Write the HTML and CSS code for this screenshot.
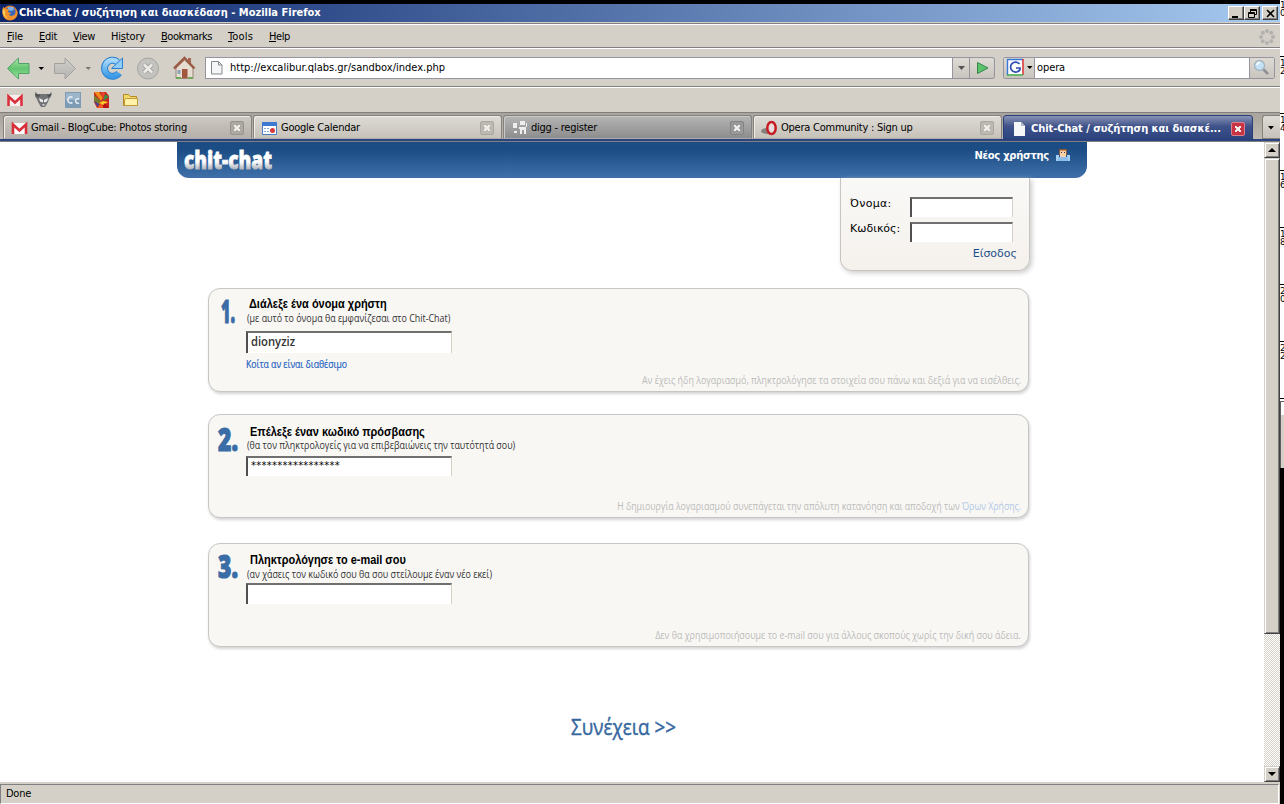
FILE: index.html
```html
<!DOCTYPE html>
<html lang="el">
<head>
<meta charset="utf-8">
<title>Chit-Chat / συζήτηση και διασκέδαση</title>
<link rel="stylesheet" href="styles.css">
</head>
<body>
<div class="desktop">
<div class="window">
  <div class="titlebar">
    <svg class="fox" width="16" height="16" viewBox="0 0 16 16"><circle cx="8" cy="8" r="7.5" fill="#e8832a"/><circle cx="8.5" cy="6.7" r="5" fill="#3a66b8"/><path d="M6 2l5 0 1 3-3 1-3-1z" fill="#7fb2e8"/><path d="M1 2l3 2 3 0-1 3 3 1-2 2 2 1 4-1 2-5c2 6-2 10-7 10C2 15-1 9 1 2z" fill="#f0912c"/><path d="M1 4l2 2 0 4 3 3c-4-1-6-5-5-9z" fill="#fbd35a"/></svg>
    <span class="t wt">Chit-Chat / συζήτηση και διασκέδαση - Mozilla Firefox</span>
    <div class="winbtns">
      <span class="wb"><svg width="12" height="10"><path d="M1 7h6v2H1z"/></svg></span><span class="wb"><svg width="12" height="10"><path d="M3.5 .5h6v5h-2M3.5 1.5h6M1.500 3.500h6v5h-6zM1.500 4.500h6M3.500 0v3" fill="none" stroke="#000"/></svg></span><span class="wb gap"><svg width="12" height="10"><path d="M2 1l7 7M9 1L2 8" stroke="#000" stroke-width="1.600"/></svg></span>
    </div>
  </div>
  <div class="menubar">
    <span class="t file"><u>F</u>ile</span><span class="t edit"><u>E</u>dit</span><span class="t vw"><u>V</u>iew</span><span class="t hist">Hi<u>s</u>tory</span><span class="t bm"><u>B</u>ookmarks</span><span class="t tools"><u>T</u>ools</span><span class="t help"><u>H</u>elp</span>
    <svg class="throb" width="18" height="18" viewBox="-9 -9 18 18" fill="#b3b1ad"><circle cy="-6" r="2"/><circle cy="6" r="2"/><circle cx="6" r="2"/><circle cx="-6" r="2"/><circle cx="4.200" cy="-4.200" r="2"/><circle cx="-4.200" cy="-4.200" r="2"/><circle cx="4.200" cy="4.200" r="2"/><circle cx="-4.200" cy="4.200" r="2"/></svg>
  </div>
  <div class="navbar">
    <svg class="navicons" width="200" height="36" viewBox="0 49 200 36">
      <defs>
        <linearGradient id="gr" x2="0" y2="1"><stop stop-color="#a9e6a9"/><stop offset=".5" stop-color="#62c470"/><stop offset="1" stop-color="#9be39a"/></linearGradient>
        <linearGradient id="gy" x2="0" y2="1"><stop stop-color="#d0cfcb"/><stop offset="1" stop-color="#b4b3af"/></linearGradient>
        <linearGradient id="bl" x2="0" y2="1"><stop stop-color="#a5d8fa"/><stop offset="1" stop-color="#3c9be6"/></linearGradient>
      </defs>
      <path d="M7.500 67.500L18.500 57v5.500h10.500v10H18.500v5.500z" fill="url(#gr)" stroke="#4fa368"/>
      <path d="M38.500 66h5.500l-2.700 3z" fill="#000"/>
      <path d="M75.500 67.500L65 57v5.500H54.500v10H65v5.500z" fill="url(#gy)" stroke="#a3a29f"/>
      <path d="M85.500 66h5.500l-2.700 3z" fill="#777"/>
      <path d="M117.500 61a8 8 0 1 0 1.500 11" fill="none" stroke="#2a7fd0" stroke-width="7"/>
      <path d="M117.500 61a8 8 0 1 0 1.500 11" fill="none" stroke="url(#bl)" stroke-width="5"/>
      <path d="M122.500 57v10.500h-11z" fill="#8fccf6" stroke="#2a7fd0"/>
      <circle cx="148" cy="67.500" r="10.500" fill="#c3c2be" stroke="#a5a4a1"/>
      <path d="M144 63.500l8 8M152 63.500l-8 8" stroke="#9e9d9a" stroke-width="4.500"/><path d="M144 63.500l8 8M152 63.500l-8 8" stroke="#ecebe8" stroke-width="2.800"/>
      <path d="M176 67v10.500h17V67l-8.500-8z" fill="#e6dcd0" stroke="#9a8578"/>
      <path d="M188 57h3v7l-3-3z" fill="#a66a52"/>
      <path d="M174 67.500l10.500-10.500 10 10.500" fill="none" stroke="#9a5c45" stroke-width="2.500"/>
      <path d="M182 68h5.500v9H182z" fill="#a3563f"/><path d="M177.500 69h3v4h-3z" fill="#8ca4bd"/><path d="M176 76h5v2h-5zM188 76h5v2h-5z" fill="#70a658"/>
    </svg>
    <div class="url">
      <svg class="page" width="14" height="16"><path d="M1.500 1.500h7l3.500 3.500v9H1.500z" fill="#f5f6f7" stroke="#85878c"/><path d="M8.500 1.500V5H12" fill="none" stroke="#85878c"/></svg>
      <span class="t">http://excalibur.qlabs.gr/sandbox/index.php</span>
      <i class="drop"><svg width="7" height="4"><path d="M0 0h7L3.500 4z" fill="#555"/></svg></i>
    </div>
    <i class="go"><svg width="13" height="14"><path d="M1.500 1.500L12 7 1.500 12.500z" fill="#5cc36d" stroke="#35884a"/></svg></i>
    <div class="search">
      <i class="eng"><svg width="26" height="18"><path d="M.5 .5h16v16H.5z" fill="#fff"/><path d="M.5 16V.5H16" fill="none" stroke="#3c78d8" stroke-width="1.500"/><path d="M16 0v16" stroke="#d8282c" stroke-width="1.500"/><path d="M0 16h16" stroke="#3aa845" stroke-width="1.500"/><path d="M12.500 5A5 5 0 1 0 13 10.500V9H9" fill="none" stroke="#2c4fb0" stroke-width="1.700"/><path d="M20 7h5.500l-2.700 3z"/></svg></i>
      <span class="t">opera</span>
      <i class="glass"><svg width="18" height="18"><path d="M9 9l6 6" stroke="#8c8f96" stroke-width="2.500"/><circle cx="6.500" cy="6.500" r="5" fill="#c4e2f4" stroke="#a4b4c0" stroke-width="1.300"/><path d="M4 6a3 3 0 0 1 3-2.500" stroke="#fff" stroke-width="1.500" fill="none"/></svg></i>
    </div>
  </div>
  <div class="bookmarks">
    <svg width="150" height="22" viewBox="0 89 150 22">
      <path d="M7 95h16v11H7z" fill="#fbeeee"/><path d="M8.500 106V96.500l6.500 6 6.500-6V106" fill="none" stroke="#d8303a" stroke-width="2.600"/>
      <path d="M36 92c0 2 2 3 4 2h7c2 1 4 0 4-2 1 3 0 5-2 7l-1 3-3 5h-4l-3-5-1-3c-2-2-3-4-1-7z" fill="#717375"/><path d="M36 92c0 2 2 3 4 2l-1 3c-3 0-4-3-3-5zM51 92c0 2-2 3-4 2l1 3c3 0 4-3 3-5z" fill="#4c4e50"/><path d="M39 98l4 2v2.500l-3-1zM48 98l-4 2v2.500l3-1z" fill="#eee"/><path d="M42 104h3l-1 2h-1z" fill="#c8c8c8"/>
      <path d="M65 92h16v16H65z" fill="#7e9bb6"/><path d="M66 93h14v7H66z" fill="#9db5c9"/><path d="M72.500 97.500a3 3 0 1 0 0 5M79 99a2.300 2.300 0 1 0 0 4" fill="none" stroke="#dfe9f1" stroke-width="1.600"/>
      <path d="M94 92h12l3 4v12H97l-3-6z" fill="#c9251c"/><path d="M94 92h5l4 6-2 3z" fill="#f28b1d"/><path d="M94 95l7 6-2 3-5-3z" fill="#7c7a2c"/><path d="M101 92l4 0-2 8z" fill="#e8432e"/><path d="M105 94l4 3-6 4z" fill="#3d8e47"/><path d="M94 101l5 3-1 3z" fill="#3e49a3"/><path d="M99 103l4-2 5 1-5 3z" fill="#ffd42a"/><path d="M97 108l4-5 3 5z" fill="#f25c1d"/><path d="M104 103l5 5h-6z" fill="#b61212"/>
      <path d="M123.500 105.500v-11h5l2 2h6v9z" fill="#f3d867" stroke="#b08a28"/><path d="M124.500 105.500v-6l2-1h11v7z" fill="#fff2a8" stroke="#c29a35"/>
    </svg>
  </div>
  <div class="tabs">
    <div class="tab dim"><svg width="18" height="16"><path d="M1 3h15v11H1z" fill="#fff"/><path d="M2 14V4.500l6.500 6 6.500-6V14" fill="none" stroke="#d8303a" stroke-width="2.600"/></svg><span class="t">Gmail - BlogCube: Photos storing</span><b class="x"></b></div>
    <div class="tab"><svg width="18" height="16"><path d="M1.500 2.500h14v12h-14z" fill="#fff" stroke="#4b7fc4"/><path d="M1 2h15v4H1z" fill="#3f7ad2"/><path d="M3 8h2v1H3zM6 8h2v1H6zM3 11h2v1H3zM6 11h2v1H6z" fill="#8bacd8"/><circle cx="11.500" cy="10.500" r="2.500" fill="#d9383c"/></svg><span class="t">Google Calendar</span><b class="x"></b></div>
    <div class="tab dark"><svg width="18" height="16" fill="#eee"><path d="M2 3h4v5H2zM3 11h3v2H3zM9 1h5v4H9zM8 7h7v7h-2v-4h-2v4H9V9H8zM15 3h1v4h-1z"/></svg><span class="t">digg - register</span><b class="x"></b></div>
    <div class="tab"><svg width="18" height="16"><ellipse cx="6" cy="11" rx="6" ry="3" fill="#85817d"/><ellipse cx="10.500" cy="8" rx="4.200" ry="6" fill="#e8dede" stroke="#c71b24" stroke-width="2.500"/></svg><span class="t">Opera Community : Sign up</span><b class="x"></b></div>
    <div class="tab on"><svg width="18" height="16"><path d="M3 1h7l4 4v10H3z" fill="#f5f6f8"/><path d="M10 1v4h4z" fill="#b3bac8"/></svg><span class="t">Chit-Chat / συζήτηση και διασκέ...</span><b class="x red"></b></div>
    <div class="tabmenu"><svg width="6" height="4"><path d="M0 0h6L3 3.500z"/></svg></div>
  </div>
  <div class="view">
    <div class="site">
      <div class="head">
        <svg class="logo" width="110" height="36"><defs><linearGradient id="lg" x2="0" y2="1"><stop offset=".6" stop-color="#fff"/><stop offset=".8" stop-color="#b4b8bd"/></linearGradient></defs><text x="7" y="26.500" textLength="88" lengthAdjust="spacingAndGlyphs" fill="url(#lg)" stroke="url(#lg)">chit-chat</text></svg>
        <span class="t new">Νέος χρήστης</span>
        <svg class="user" width="16" height="14"><path d="M1 7h3v6H1zM12 7h3v6h-3z" fill="#a6cdf2"/><path d="M3 9h10v4H3z" fill="#8fbdeb"/><path d="M4 1h8v6H4z" fill="#8c5a38"/><path d="M5 2h6v7H5z" fill="#f7cfa8"/><path d="M5 2h6v1H5z" fill="#c98a55"/><path d="M6 4h1v1H6zM9 4h1v1H9z" fill="#333"/></svg>
      </div>
      <form class="login">
        <label><span class="t name">Όνομα:</span><i class="field"></i></label>
        <label><span class="t">Κωδικός:</span><i class="field"></i></label>
        <a class="t enter">Είσοδος</a>
      </form>
      <section class="panel p1">
        <svg class="num" width="28" height="34"><text x="3" y="28" textLength="14" lengthAdjust="spacingAndGlyphs">1.</text></svg>
        <h2><span class="t">Διάλεξε ένα όνομα χρήστη</span></h2>
        <p class="sub"><span class="t">(με αυτό το όνομα θα εμφανίζεσαι στο Chit-Chat)</span></p>
        <div class="field big"><span class="t">dionyziz</span></div>
        <a class="check"><span class="t">Κοίτα αν είναι διαθέσιμο</span></a>
        <p class="note"><span class="t">Αν έχεις ήδη λογαριασμό, πληκτρολόγησε τα στοιχεία σου πάνω και δεξιά για να εισέλθεις.</span></p>
      </section>
      <section class="panel p2">
        <svg class="num" width="28" height="34"><text x="0" y="28" textLength="20" lengthAdjust="spacingAndGlyphs">2.</text></svg>
        <h2><span class="t">Επέλεξε έναν κωδικό πρόσβασης</span></h2>
        <p class="sub"><span class="t">(θα τον πληκτρολογείς για να επιβεβαιώνεις την ταυτότητά σου)</span></p>
        <div class="field big"><span class="t">*****************</span></div>
        <p class="note"><span class="t">Η δημιουργία λογαριασμού συνεπάγεται την απόλυτη κατανόηση και αποδοχή των <a>Όρων Χρήσης.</a></span></p>
      </section>
      <section class="panel p3">
        <svg class="num" width="28" height="34"><text x="0" y="28" textLength="20" lengthAdjust="spacingAndGlyphs">3.</text></svg>
        <h2><span class="t">Πληκτρολόγησε το e-mail σου</span></h2>
        <p class="sub"><span class="t">(αν χάσεις τον κωδικό σου θα σου στείλουμε έναν νέο εκεί)</span></p>
        <div class="field big"></div>
        <p class="note"><span class="t">Δεν θα χρησιμοποιήσουμε το e-mail σου για άλλους σκοπούς χωρίς την δική σου άδεια.</span></p>
      </section>
      <a class="next"><span class="t">Συνέχεια &gt;&gt;</span></a>
    </div>
    <div class="scroll">
      <i class="sb"><svg width="8" height="4"><path d="M0 4h8L4 0z"/></svg></i>
      <i class="thumb"></i><i class="trough"></i>
      <i class="sb"><svg width="8" height="4"><path d="M0 0h8L4 4z"/></svg></i>
    </div>
  </div>
  <div class="status"><div class="pane"><span class="t">Done</span></div></div>
</div>
<div class="edge">
  <div class="tick first">1<br>0</div><div class="tick">1<br>2</div><div class="tick">1<br>4</div><div class="tick">1<br>6</div><div class="tick">1<br>8</div><div class="tick">2<br>0</div><div class="tick">2<br>2</div><div class="tick last"></div>
  <div class="corner"></div>
</div>
</div>
</body>
</html>
```
FILE: styles.css
```css
* { box-sizing: border-box; }
body { margin: 0; background: #000; font: 11px/14px "DejaVu Sans Condensed", "DejaVu Sans", sans-serif; color: #000; overflow: hidden; }
i, b { font-style: normal; font-weight: normal; }
.t { display: inline-block; white-space: pre; transform-origin: 0 50%; }
h2, p { margin: 0; }
svg { display: block; flex: none; overflow: visible; }
.desktop { display: flex; width: 1284px; height: 804px; }
.window { width: 1280px; padding-top: 4px; display: flex; flex-direction: column; background: #d4d0c8; box-shadow: inset 0 4px #000; }

.titlebar { height: 18px; display: flex; align-items: center; padding: 0 2px; background: linear-gradient(90deg, #0a246a, #a6caf0); color: #fff; }
.wt { font: bold 11px/16px "DejaVu Sans Condensed", sans-serif; margin-left: 1px; }
.winbtns { display: flex; margin-left: auto; }
.wb { width: 16px; height: 14px; padding: 2px; background: #d4d0c8; border: 1px solid; border-color: #fff #404040 #404040 #fff; box-shadow: inset -1px -1px #808080; }
.wb.gap { margin-left: 2px; }
.menubar { height: 27px; border-top: 1px solid #d4d0c8; box-shadow: inset 0 1px #808080, inset 0 2px #fff, inset 0 -1px #fff, inset 0 -2px #808080; display: flex; align-items: center; padding: 1px 4px 0 7px; gap: 16px; }
.file { letter-spacing: -.12px; }
.edit { letter-spacing: -.3px; }
.vw { letter-spacing: -.37px; }
.hist { letter-spacing: -.17px; }
.bm { letter-spacing: -.48px; }
.tools { letter-spacing: .16px; }
.help { letter-spacing: -.4px; }
.throb { margin-left: auto; }
.navbar { height: 39px; display: flex; align-items: center; box-shadow: inset 0 -1px #fff, inset 0 -2px #808080; padding-bottom: 2px; }
.url { margin-left: 5px; width: 765px; height: 22px; background: #fff; border: 1px solid #9694a0; display: flex; align-items: center; padding-left: 4px; }
.url .page { margin-right: 6px; }
.drop, .go, .eng, .glass { height: 20px; display: flex; align-items: center; justify-content: center; background: linear-gradient(#dedbd5, #c9c5bd); }
.drop { width: 17px; margin-left: auto; border-left: 1px solid #9694a0; }
.go { width: 25px; height: 22px; border: 1px solid #9694a0; border-left: 0; border-radius: 0 3px 3px 0; }
.search { margin-left: 8px; width: 272px; height: 22px; background: #fff; border: 1px solid #9694a0; border-radius: 2px; display: flex; align-items: center; }
.search .t { letter-spacing: -.1px; }
.eng { width: 31px; border-right: 1px solid #9694a0; margin-right: 2px; padding-left: 1px; }
.glass { width: 25px; margin-left: auto; border-left: 1px solid #9694a0; }
.bookmarks { height: 25px; padding-top: 1px; border-bottom: 1px solid #808080; }
.tabs { height: 29px; padding: 2px 0 0 3px; background: linear-gradient(#a9a39c, #c0bbb3); display: flex; gap: 1px; border-bottom: 1px solid #808080; box-shadow: inset 0 -2px #2b437f; }
.tab { flex: none; width: 249px; height: 24px; display: flex; align-items: center; padding: 2px 7px 0 7px; border: 1px solid #85827d; border-bottom-color: #aaa; border-radius: 3px 3px 0 0; background: linear-gradient(#dedbd6, #c6c2ba); box-shadow: inset 1px 1px #efede9; }
.tab .t { margin-left: 2px; letter-spacing: -.24px; }
.tab.dim { background: linear-gradient(#cdc9c3, #b5b0a9); }
.tab.dark { background: linear-gradient(#b5b5b5, #8d8d8d); box-shadow: inset 1px 1px #cacaca; }
.tab.on { width: 250px; height: 25px; background: linear-gradient(#8793b5, #3f5289 45%, #2b437f); color: #fff; box-shadow: none; border-color: #283f78; }
.tab.on .t { font-weight: bold; letter-spacing: -.05px; }
.x { width: 14px; height: 14px; margin-left: auto; border: 1px solid #aaa79f; border-radius: 2px; background: linear-gradient(45deg, transparent 38%, #efeeeb 38% 62%, transparent 62%) 3px 3px/6px 6px no-repeat, linear-gradient(-45deg, transparent 38%, #efeeeb 38% 62%, transparent 62%) 3px 3px/6px 6px no-repeat, #bcb9b2; }
.dim .x { background-color: #aca9a3; border-color: #96938d; }
.dark .x { border-color: #848484; background-color: #999; }
.x.red { border-color: #d9808a; background-color: #c73444; }
.tabmenu { flex: none; margin-left: 8px; width: 18px; height: 24px; border: 1px solid #85827d; border-right: 0; border-radius: 3px 0 0 0; background: linear-gradient(#dedbd6, #c6c2ba); padding: 10px 0 0 5px; }

.view { height: 640px; display: flex; background: #fff; }
.site { width: 1264px; }
.head { width: 910px; height: 36px; margin: 0 auto; display: flex; background: linear-gradient(#1b4c83 20%, #3f70aa); border-radius: 0 0 12px 12px; color: #fff; }
.logo text { font: 800 25px "Open Sans", sans-serif; stroke-width: .8px; }
.new { margin-left: auto; padding-top: 7px; font: bold 10px/14px "DejaVu Sans", sans-serif; letter-spacing: -.3px; }
.user { margin: 6px 16px 0 6px; }
.login { margin-left: 840px; width: 190px; height: 93px; border: 1px solid #c8c5c1; border-top: 0; border-radius: 0 0 12px 12px; background: linear-gradient(#f9f9f7, #f5f1ed); box-shadow: 2px 2px 5px #ccc; padding: 19px 16px 0 9px; font: 11px/14px "DejaVu Sans", sans-serif; }
.login label { display: flex; justify-content: space-between; height: 25px; }
.name { letter-spacing: .3px; }
.field { display: block; background: #fff; border: solid #d4d0c8; border-width: 2px 1px 0 2px; border-top-color: #707070; border-left-color: #505050; }
.login .field { width: 103px; height: 20px; }
.enter { display: block; width: max-content; margin: 0 -4px 0 auto; color: #1c4f89; }
.panel { margin-left: 208px; width: 821px; height: 104px; border: 1px solid #c6c6c5; border-radius: 12px; background: #f8f7f4; box-shadow: 1px 2px 3px #d4d4d4; position: relative; padding-left: 37px; }
.p1 { margin-top: 17px; padding-top: 8px; }
.p2 { margin-top: 22px; padding-top: 10px; }
.p3 { margin-top: 25px; padding-top: 9px; }
.num { position: absolute; left: 9px; top: 6px; }
.p2 .num { top: 8px; }
.num text { font: 800 32px "Open Sans", sans-serif; fill: #3a6ca6; stroke: #3a6ca6; stroke-width: 1.2px; }
.panel h2 { font: bold 12px/14px "Liberation Sans", sans-serif; padding-left: 4px; }
.p1 h2 { padding-left: 3px; }
.panel h2 .t { transform: scaleX(.913); }
.sub { font: 10px/12px "Open Sans", sans-serif; color: #333; padding-left: 1px; }
.sub .t { transform: scaleX(.888); }
.p1 .sub, .p3 .sub { margin-top: 1px; }
.big { width: 206px; height: 20px; padding-left: 3px; margin-top: 5px; }
.p1 .big { height: 22px; margin-top: 7px; font: 600 12px/18px "Open Sans", sans-serif; color: #333; }
.p1 .big .t { transform: scaleX(.936); }
.p2 .big { padding-top: 1px; }
.p2 .big .t { letter-spacing: .29px; }
.p3 .big { height: 21px; margin-top: 3px; }
.check { display: block; margin-top: 5px; font: 10px/12px "Open Sans", sans-serif; color: #1c5fc0; }
.check .t { transform: scaleX(.866); -webkit-text-stroke: .2px; }
.note { position: absolute; right: 7px; bottom: 5px; font: 10px/12px "Open Sans", sans-serif; color: #bcbcba; }
.note .t { transform-origin: 100% 50%; transform: scaleX(.89); }
.p2 .note .t { transform: scaleX(.876); }
.note a { color: #b3c8e4; }
.next { display: block; margin: 66px 0 0 571px; font: 21px/28px "Open Sans", sans-serif; color: #3567a0; }
.next .t { transform: scaleX(.898); -webkit-text-stroke: .4px; }

.scroll { width: 16px; display: flex; flex-direction: column; }
.sb, .thumb { background: #d4d0c8; border: 1px solid; border-color: #d4d0c8 #404040 #404040 #d4d0c8; box-shadow: inset 1px 1px #fff, inset -1px -1px #808080; }
.sb { height: 16px; padding: 5px 0 0 3px; }
.thumb { height: 476px; }
.trough { flex: 1; background: repeating-conic-gradient(#d4d0c8 0 25%, #fff 0 50%) 0 0/2px 2px; }
.status { height: 22px; padding: 2px 1px 0 0; }
.pane { height: 20px; border: 1px solid; border-color: #808080 #fff #fff #808080; padding: 2px 0 0 5px; letter-spacing: -.26px; }

.edge { width: 4px; overflow: hidden; background: #000; }
.tick { height: 57px; background: #fff; border-top: 1px solid #000; padding: 2px 0 0 0; font: 9px/8px "DejaVu Sans", sans-serif; }
.tick.first { height: 56px; border-top: 0; padding-top: 1px; }
.tick.last { height: 3px; }
.corner { height: 67px; background: #d4d0c8; border: solid #606060; border-width: 1px 0 0 1px; box-shadow: inset 0 13px #fff; }
```
